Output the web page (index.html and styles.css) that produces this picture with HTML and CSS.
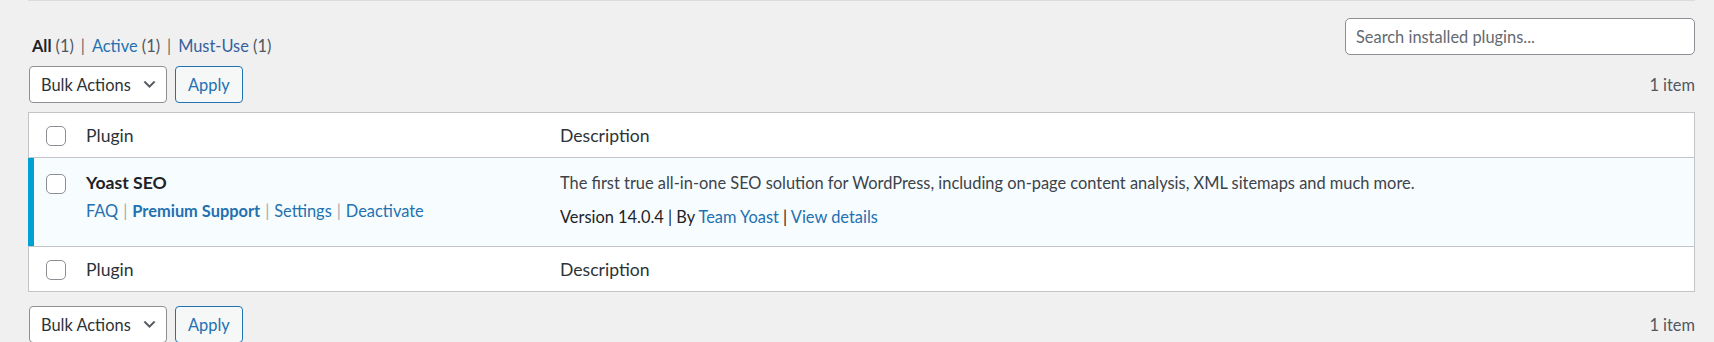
FILE: index.html
```html
<!DOCTYPE html>
<html lang="en">
<head>
    <meta charset="UTF-8">
    <meta name="viewport" content="width=device-width, initial-scale=1.0">
    <title>Plugins</title>
    <link rel="stylesheet" href="styles.css">
</head>
<body>

<div class="wrap">
    <div class="top-edge"></div>

    <div class="filters">
        <ul class="subsubsub">
            <li><a class="current">All <span class="count">(1)</span></a><span class="sep">|</span></li>
            <li><a href="#">Active <span class="count">(1)</span></a><span class="sep">|</span></li>
            <li><a href="#" class="visited">Must-Use <span class="count">(1)</span></a></li>
        </ul>
        <input class="search" type="search" placeholder="Search installed plugins...">
    </div>

    <div class="tablenav">
        <div class="actions">
            <div class="select">
                <span>Bulk Actions</span>
                <svg width="17" height="17" viewBox="0 0 20 20"><path d="M5 6l5 5 5-5 2 1-7 7-7-7 2-1z" fill="#50575e"/></svg>
            </div>
            <button class="button">Apply</button>
        </div>
        <span class="num">1 item</span>
    </div>

    <table class="plugins">
        <colgroup>
            <col class="col-cb">
            <col class="col-name">
            <col>
        </colgroup>
        <thead>
            <tr class="head">
                <th class="check-column"><span class="checkbox"></span></th>
                <th>Plugin</th>
                <th>Description</th>
            </tr>
        </thead>
        <tbody>
            <tr class="active">
                <th class="check-column"><span class="checkbox"></span></th>
                <td>
                    <strong class="title">Yoast SEO</strong>
                    <div class="row-actions">
                        <a href="#">FAQ</a><span class="sep">|</span><a href="#"><b>Premium Support</b></a><span class="sep">|</span><a href="#">Settings</a><span class="sep">|</span><a href="#">Deactivate</a>
                    </div>
                </td>
                <td>
                    <p class="desc">The first true all-in-one SEO solution for WordPress, including on-page content analysis, XML sitemaps and much more.</p>
                    <p class="version">Version 14.0.4 | By <a href="#">Team Yoast</a> | <a href="#">View details</a></p>
                </td>
            </tr>
        </tbody>
        <tfoot>
            <tr class="head">
                <th class="check-column"><span class="checkbox"></span></th>
                <th>Plugin</th>
                <th>Description</th>
            </tr>
        </tfoot>
    </table>

    <div class="tablenav bottom">
        <div class="actions">
            <div class="select">
                <span>Bulk Actions</span>
                <svg width="17" height="17" viewBox="0 0 20 20"><path d="M5 6l5 5 5-5 2 1-7 7-7-7 2-1z" fill="#50575e"/></svg>
            </div>
            <button class="button">Apply</button>
        </div>
        <span class="num">1 item</span>
    </div>
</div>

</body>
</html>
```

FILE: styles.css
```css
body {
    margin: 0;
    background-color: #f0f0f1;
    color: #3c434a;
    font-family: Lato, "Noto Sans", sans-serif;
    font-size: 16.4px;
    overflow: hidden;
}

a {
    color: #2271b1;
    text-decoration: none;
}

.wrap {
    padding: 0 19px 0 28px;
}

.top-edge {
    height: 1px;
    background-color: #dcdcde;
}

/* filters + search */
.filters {
    display: flex;
    justify-content: space-between;
    align-items: flex-end;
    padding-top: 17px;
}

.subsubsub {
    display: flex;
    list-style: none;
    margin: 0 0 0 4px;
    padding: 0;
    line-height: 18px;
    color: #646970;
}

.subsubsub .current {
    color: #1d2327;
    font-weight: 700;
}

.subsubsub .count {
    color: #50575e;
    font-weight: 400;
}

.subsubsub .visited {
    color: #35609c;
}

.subsubsub .sep {
    padding: 0 7px;
}

.search {
    width: 350px;
    height: 37px;
    box-sizing: border-box;
    border: 1px solid #8c8f94;
    border-radius: 5px;
    padding: 0 10px;
    background-color: #fff;
    font: inherit;
    color: #2c3338;
}

.search::placeholder {
    color: #646970;
}

/* bulk actions bar */
.tablenav {
    display: flex;
    justify-content: space-between;
    align-items: center;
    height: 37px;
    margin-top: 11px;
}

.tablenav.bottom {
    margin-top: 14px;
}

.actions {
    display: flex;
    gap: 8px;
    margin-left: 1px;
}

.select {
    display: flex;
    align-items: center;
    justify-content: space-between;
    width: 138px;
    height: 37px;
    box-sizing: border-box;
    padding: 0 8px 0 11px;
    border: 1px solid #8c8f94;
    border-radius: 4px;
    background-color: #fff;
    color: #2c3338;
}

.button {
    height: 37px;
    padding: 0 12px;
    border: 1px solid #2271b1;
    border-radius: 4px;
    background-color: #f6f7f7;
    color: #2271b1;
    font: inherit;
}

.num {
    color: #50575e;
}

/* table */
.plugins {
    width: 100%;
    margin-top: 9px;
    border: 1px solid #c3c4c7;
    border-spacing: 0;
    table-layout: fixed;
    background-color: #fff;
}

.col-cb {
    width: 47px;
}

.col-name {
    width: 474px;
}

.plugins th,
.plugins td {
    text-align: left;
    vertical-align: top;
    font-weight: 400;
    padding: 12px 10px 16px;
}

.plugins thead th {
    border-bottom: 1px solid #c3c4c7;
}

.plugins tfoot th {
    border-top: 1px solid #c3c4c7;
}

.plugins .head th {
    padding: 11px 10px 9px;
    line-height: 24px;
    font-size: 17.6px;
    color: #2c3338;
}

.plugins .head .check-column,
.plugins .check-column {
    padding: 13px 0 0 17px;
}

.plugins .active .check-column {
    padding-top: 16px;
    box-shadow: -1px 0 0 #00a0d2, inset 5px 0 0 #00a0d2;
}

.plugins .active th,
.plugins .active td {
    background-color: #f7fcfe;
}

.checkbox {
    display: block;
    width: 20px;
    height: 20px;
    box-sizing: border-box;
    border: 1px solid #8c8f94;
    border-radius: 5px;
    background-color: #fff;
}

.title {
    display: block;
    line-height: 26px;
    font-size: 17.6px;
    font-weight: 700;
    color: #1d2327;
}

.row-actions {
    margin-top: 2px;
    line-height: 26px;
    color: #a7aaad;
}

.row-actions .sep {
    padding: 0 5px;
}

.desc,
.version {
    margin: 0;
    line-height: 26px;
}

.version {
    margin-top: 8px;
    color: #1d2327;
}
```
